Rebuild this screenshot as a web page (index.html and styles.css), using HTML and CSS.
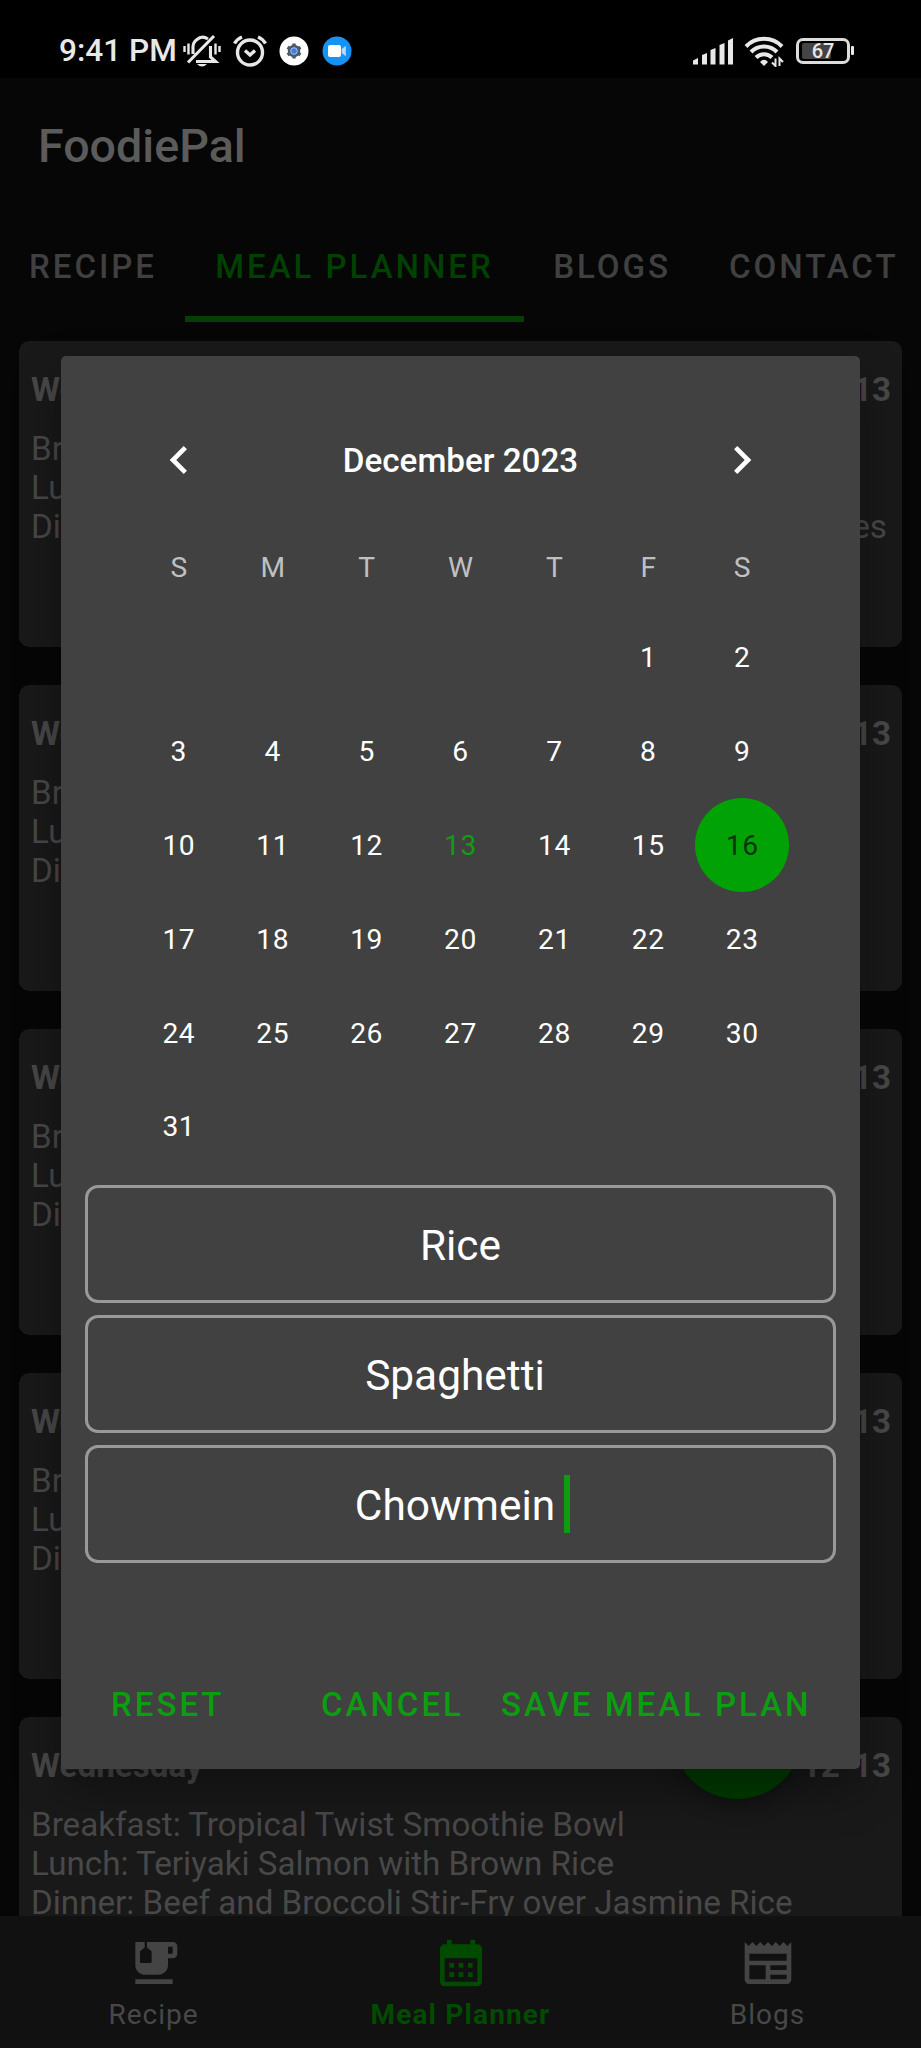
FILE: index.html
```html
<!DOCTYPE html>
<html lang="en">
<head>
<meta charset="utf-8">
<title>FoodiePal</title>
<link rel="stylesheet" href="styles.css">
</head>
<body>
<div class="screen">
  <header class="status">
    <span class="clock">9:41 PM</span>
    <svg class="s-bell" viewBox="0 0 38 34" fill="none" stroke="#e8e8e8" stroke-width="3.100"><path d="M10 20V14a9.500 9.500 0 0 1 4-8.500q5-4.500 11-.5M27.500 12v11l5 4.500H13M5 28.500L31 2" /><path d="M1.500 12v6M5.500 9.500v11M32.500 9.500v11M36.500 12v6" stroke-width="2.400"/><path d="M14 30h10q-5 5-10 0z" fill="#e8e8e8" stroke="none"/></svg>
    <svg class="s-alarm" viewBox="0 0 34 32" fill="none" stroke="#e8e8e8" stroke-width="3.400"><circle cx="17" cy="17.500" r="12.500"/><path d="M12 15.500l5 4.500 5-4.500M1.500 8.500Q4 4 9 2M32.500 8.500Q30 4 25 2"/></svg>
    <svg class="s-gear" viewBox="0 0 30 30"><circle cx="15" cy="15" r="14.500" fill="#fff"/><circle cx="15" cy="15" r="6.200" fill="#4b5a6b"/><path d="M15 7.500v15M8.500 11.250l13 7.500M8.500 18.750l13-7.500" stroke="#4b5a6b" stroke-width="3.400"/><circle cx="15" cy="15" r="3.300" fill="#3f7de8" stroke="#a9c3ee"/></svg>
    <svg class="s-zoom" viewBox="0 0 30 30"><circle cx="15" cy="15" r="14.500" fill="#1492f5"/><rect x="6" y="9" width="13" height="12" rx="2" fill="#fff"/><path d="M19.800 13l4-3.200v10.400l-4-3.200z" fill="#b9dcfb"/></svg>
    <span class="spacer"></span>
    <svg class="s-signal" viewBox="0 0 42 27" fill="#e8e8e8"><path d="M1 26.500v-4l5-2.500v6.500zM10 26.500V17l5-2v11.500zM18.500 26.500V12l5-2v16.500zM27.500 26.500V7l5-2v21.500zM36 26.500V2.500L41 0v26.500z"/></svg>
    <svg class="s-wifi" viewBox="0 0 40 31" fill="none" stroke="#e8e8e8" stroke-width="4"><path d="M2 10.500a25 25 0 0 1 36 0M7 16a18 18 0 0 1 26 0M12 21.500a11.500 11.500 0 0 1 16 0"/><path d="M16 26q4-4.500 8 0l-4 4z" fill="#e8e8e8" stroke="none"/><path d="M31.500 22.500v7.500l-3.500-3.500M35.500 30v-7.500l3.500 3.500" stroke-width="2"/></svg>
    <span class="battery"><span class="charge"></span><b>67</b></span>
  </header>
  <h1 class="app-title">FoodiePal</h1>
  <nav class="tabs">
    <span class="tab t1">RECIPE</span><span class="tab t2 on">MEAL PLANNER</span><span class="tab t3">BLOGS</span><span class="tab t4">CONTACT</span>
  </nav>
  <main class="list">
    <article class="card"><div class="head"><span>Wednesday</span><span>12-13</span></div><p>Breakfast:</p><p>Lunch:</p><p class="split"><span>Dinner:</span><span class="tail">Vegetables</span></p></article>
    <article class="card"><div class="head"><span>Wednesday</span><span>12-13</span></div><p>Breakfast:</p><p>Lunch:</p><p>Dinner:</p></article>
    <article class="card"><div class="head"><span>Wednesday</span><span>12-13</span></div><p>Breakfast:</p><p>Lunch:</p><p>Dinner:</p></article>
    <article class="card"><div class="head"><span>Wednesday</span><span>12-13</span></div><p>Breakfast:</p><p>Lunch:</p><p>Dinner:</p></article>
    <article class="card"><div class="head"><span>Wednesday</span><span>12-13</span></div><p>Breakfast: Tropical Twist Smoothie Bowl</p><p>Lunch: Teriyaki Salmon with Brown Rice</p><p>Dinner: Beef and Broccoli Stir-Fry over Jasmine Rice</p></article>
  </main>
  <div class="fab"></div>
  <footer class="bottom">
    <div class="item"><svg viewBox="0 0 24 24" fill="#444"><path fill-rule="evenodd" d="M4 19h16v2H4zM20 3H9v2.400l1.810 1.450c.12.090.19.240.19.390v4.260c0 .28-.22.500-.5.500h-4a.5.500 0 0 1-.5-.5V7.240c0-.15.070-.3.190-.39L8 5.400V3H4v10c0 2.210 1.790 4 4 4h6c2.210 0 4-1.790 4-4v-3h2a2 2 0 0 0 2-2V5a2 2 0 0 0-2-2zm0 5h-2V5h2v3z"/></svg><span>Recipe</span></div>
    <div class="item on"><svg viewBox="0 0 24 24" fill="#004b00"><path fill-rule="evenodd" d="M19 4h-1V2h-2v2H8V2H6v2H5a2 2 0 0 0-2 2v14a2 2 0 0 0 2 2h14a2 2 0 0 0 2-2V6a2 2 0 0 0-2-2zm0 16H5V10h14zM7 12h2v2H7zm4 0h2v2h-2zm4 0h2v2h-2zM7 16h2v2H7zm4 0h2v2h-2zm4 0h2v2h-2z"/></svg><span>Meal Planner</span></div>
    <div class="item"><svg viewBox="0 0 24 24" fill="#444"><path fill-rule="evenodd" d="M22 3l-1.670 1.670L18.670 3 17 4.670 15.330 3l-1.660 1.670L12 3l-1.670 1.670L8.670 3 7 4.670 5.330 3 3.670 4.670 2 3v16a2 2 0 0 0 2 2h16a2 2 0 0 0 2-2zM11 19H4v-6h7zm9 0h-7v-2h7zm0-4h-7v-2h7zm0-4H4V8h16z"/></svg><span>Blogs</span></div>
  </footer>
  <section class="dialog">
    <div class="month">
      <svg viewBox="0 0 24 24" fill="#fff"><path d="M15.410 7.410L14 6l-6 6 6 6 1.410-1.410L10.830 12z"/></svg>
      <span>December 2023</span>
      <svg viewBox="0 0 24 24" fill="#fff"><path d="M10 6L8.590 7.410 13.170 12l-4.580 4.590L10 18l6-6z"/></svg>
    </div>
    <div class="week"><span>S</span><span>M</span><span>T</span><span>W</span><span>T</span><span>F</span><span>S</span></div>
    <div class="days">
      <span class="first">1</span><span>2</span>
      <span>3</span><span>4</span><span>5</span><span>6</span><span>7</span><span>8</span><span>9</span>
      <span>10</span><span>11</span><span>12</span><span class="today">13</span><span>14</span><span>15</span><span class="picked">16</span>
      <span>17</span><span>18</span><span>19</span><span>20</span><span>21</span><span>22</span><span>23</span>
      <span>24</span><span>25</span><span>26</span><span>27</span><span>28</span><span>29</span><span>30</span>
      <span>31</span>
    </div>
    <div class="fields">
      <div class="field">Rice</div>
      <div class="field trailing">Spaghetti </div>
      <div class="field active">Chowmein <i class="caret"></i></div>
    </div>
    <div class="actions"><span class="reset">RESET</span><span class="cancel">CANCEL</span><span>SAVE MEAL PLAN</span></div>
  </section>
</div>
</body>
</html>
```
FILE: styles.css
```css
* { box-sizing: border-box; }
body { margin: 0; background: #000; font-family: Roboto, "Liberation Sans", sans-serif; }
.screen { position: relative; width: 921px; height: 2048px; overflow: hidden; background: #060606; display: flex; flex-direction: column; }
.status { height: 78px; flex: none; background: #000; display: flex; align-items: center; padding: 24px 65px 0 59px; color: #e8e8e8; }
.clock { font-size: 31.600px; font-weight: 500; line-height: 40px; width: 124px; white-space: nowrap; }
.status svg { flex: none; }
.s-bell { width: 38px; height: 34px; }
.s-alarm { width: 34px; height: 32px; margin-left: 12px; }
.s-gear { width: 30px; height: 30px; margin-left: 12px; }
.s-zoom { width: 30px; height: 30px; margin-left: 13px; }
.spacer { flex: 1; }
.s-signal { width: 42px; height: 27px; }
.s-wifi { width: 40px; height: 31px; margin-left: 10px; }
.battery { position: relative; width: 54px; height: 26px; margin: 0 6px 0 12px; border: 3px solid #dcdcdc; border-radius: 7px; display: flex; align-items: center; justify-content: center; }
.battery::after { content: ""; position: absolute; left: 52px; top: 5px; width: 3px; height: 9px; border-radius: 1px; background: #e8e8e8; }
.battery b { position: relative; font-size: 20px; font-weight: 500; line-height: 20px; }
.charge { position: absolute; left: 3px; top: 2px; width: 29px; height: 16px; background: #444; border-radius: 2px; }
.app-title { margin: 0; flex: none; height: 131px; padding: 40px 0 0 38px; font-size: 46.600px; line-height: 56px; font-weight: 500; color: #5b5b5b; }
.tabs { flex: none; height: 113px; display: flex; font-size: 33.100px; font-weight: 500; letter-spacing: 2.930px; color: #404040; white-space: nowrap; }
.tab { height: 113px; line-height: 116px; text-align: center; }
.t1 { width: 186px; margin-right: -1px; }
.t2 { width: 339px; border-bottom: 6px solid #053f05; color: #004000; }
.t3 { width: 176px; }
.t4 { padding-left: 29px; }
.list { flex: none; margin-top: 18.500px; padding: 0 19px; display: flex; flex-direction: column; gap: 38px; }
.card { height: 306px; padding: 29px 11px 0 12px; border-radius: 10px; background: #191919; color: #484848; font-size: 33.200px; flex: none; }
.head { display: flex; justify-content: space-between; font-weight: 700; line-height: 39px; margin-bottom: 20px; }
.card p { margin: 0; line-height: 39.300px; white-space: nowrap; }
.split { display: flex; justify-content: space-between; }
.tail { margin-right: 4px; }
.fab { position: absolute; left: 672px; top: 1668px; width: 131px; height: 131px; border-radius: 50%; background: #003a00; box-shadow: 0 8px 20px rgba(0,0,0,.3); }
.bottom { position: absolute; left: 0; top: 1916px; width: 921px; height: 132px; background: #111; display: grid; grid-template-columns: repeat(3, 1fr); color: #484848; font-size: 28px; letter-spacing: 1px; }
.item { display: flex; flex-direction: column; align-items: center; padding-top: 19px; }
.item svg { width: 56px; height: 56px; }
.item span { line-height: 34px; margin-top: 7px; }
.item.on { color: #004b00; font-weight: 700; letter-spacing: 1.150px; }
.dialog { position: absolute; left: 61px; top: 356px; width: 799px; height: 1413px; border-radius: 5px; background: #414141; color: #fff; padding: 0 24px; box-shadow: 0 20px 45px rgba(0,0,0,.35); }
.month { display: flex; justify-content: space-between; align-items: center; height: 56px; margin: 76px 66px 0; font-size: 33.200px; font-weight: 500; }
.month svg { width: 56px; height: 56px; }
.week, .days { display: grid; grid-template-columns: repeat(7, 93.900px); justify-content: center; text-align: center; font-size: 28.200px; }
.week { margin-top: 62px; line-height: 36px; color: #c0c0c0; }
.days { margin-top: 24px; grid-auto-rows: 93.900px; line-height: 95px; letter-spacing: .6px; }
.first { grid-column: 6; }
.today { color: #149a14; }
.picked { background: #00a205; border-radius: 50%; color: #0b340b; }
.fields { margin-top: 12px; display: flex; flex-direction: column; gap: 12px; }
.field { height: 118px; padding-top: 2px; border: 3px solid #999; border-radius: 13px; display: flex; align-items: center; justify-content: center; font-size: 42.400px; }
.trailing { padding-right: 11px; }
.active { padding-left: 4px; }
.caret { width: 6px; height: 58px; margin: -2px 0 0 9px; background: #0c9d10; }
.actions { display: flex; margin-top: 120px; padding: 0 0 0 26px; font-size: 33.100px; font-weight: 500; letter-spacing: 2.950px; line-height: 44px; color: #0c9d10; white-space: nowrap; }
.reset { width: 210px; }
.cancel { width: 180px; }
```
